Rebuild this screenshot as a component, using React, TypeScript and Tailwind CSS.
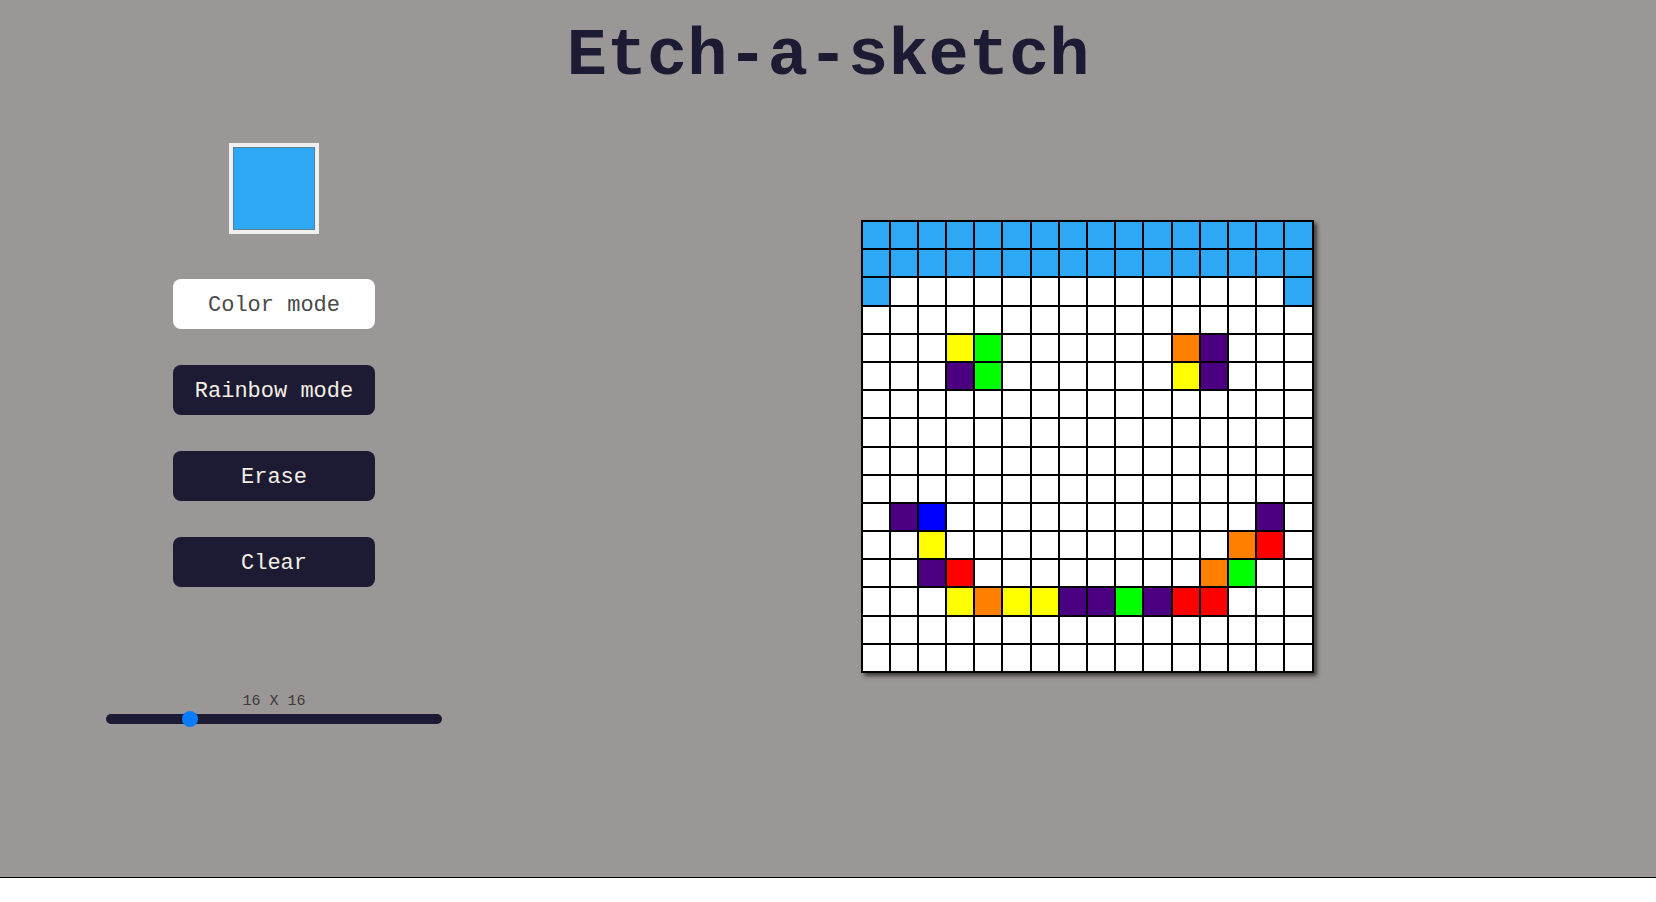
import React from "react";

const B = "#2ea8f5";
const Y = "#ffff00";
const G = "#00ff00";
const P = "#4b0082";
const O = "#ff7f00";
const R = "#ff0000";
const U = "#0000ff";

// painted cells, "row,col" -> colour
const painted: Record<string, string> = {
  "2,0": B, "2,15": B,
  "4,3": Y, "4,4": G, "4,11": O, "4,12": P,
  "5,3": P, "5,4": G, "5,11": Y, "5,12": P,
  "10,1": P, "10,2": U, "10,14": P,
  "11,2": Y, "11,13": O, "11,14": R,
  "12,2": P, "12,3": R, "12,12": O, "12,13": G,
  "13,3": Y, "13,4": O, "13,5": Y, "13,6": Y, "13,7": P, "13,8": P,
  "13,9": G, "13,10": P, "13,11": R, "13,12": R,
};

const cellColor = (r: number, c: number) => {
  if (r < 2) return B;
  return painted[`${r},${c}`] ?? "#ffffff";
};

const mono = { fontFamily: '"Courier New", "Liberation Mono", monospace' };

const ModeButton: React.FC<{ label: string; active?: boolean }> = ({ label, active }) => (
  <button
    className={`w-[202px] h-[50px] pt-[3px] rounded-[8px] text-[22px] leading-none ${
      active ? "bg-white text-[#4a4a4a]" : "bg-[#1c1b33] text-[#f4efe4]"
    }`}
    style={mono}
  >
    {label}
  </button>
);

export default function App() {
  const size = 16;
  return (
    <div className="w-full">
      <div className="h-[878px] bg-[#9b9796] border-b border-black" style={mono}>
        {/* titre */}
        <h1 className="pt-[23px] text-center text-[67px] leading-[67px] font-bold text-[#1c1b33]">
          Etch-a-sketch
        </h1>

        <div className="flex mt-[53px]">
          {/* panneau gauche */}
          <div className="w-[518px] pl-[30px] flex flex-col items-center">
            <div className="w-[90px] h-[91px] border-[4px] border-[#efefef] bg-[#efefef]">
              <div className="w-full h-full border border-[#5f7f95]" style={{ background: B }} />
            </div>

            <div className="mt-[45px] flex flex-col gap-[36px]">
              <ModeButton label="Color mode" active />
              <ModeButton label="Rainbow mode" />
              <ModeButton label="Erase" />
              <ModeButton label="Clear" />
            </div>

            <div className="mt-[106px] flex flex-col items-center">
              <span className="text-[15px] leading-[17px] text-[#3a3a3a]">16 X 16</span>
              <div className="relative mt-[4px] w-[336px] h-[10px] rounded-full bg-[#1c1b33]">
                <div className="absolute left-[76px] top-[-3px] w-[16px] h-[16px] rounded-full bg-[#0a7cff]" />
              </div>
            </div>
          </div>

          {/* grille */}
          <div className="flex-1 flex justify-center pt-[77px]">
            <div className="w-[453px] h-[453px] grid grid-cols-16 grid-rows-16 border border-black shadow-[3px_3px_4px_rgba(0,0,0,0.6)]">
              {Array.from({ length: size * size }).map((_, i) => {
                const r = Math.floor(i / size);
                const c = i % size;
                return (
                  <div
                    key={i}
                    className="border border-black"
                    style={{ background: cellColor(r, c) }}
                  />
                );
              })}
            </div>
          </div>
        </div>
      </div>
    </div>
  );
}
